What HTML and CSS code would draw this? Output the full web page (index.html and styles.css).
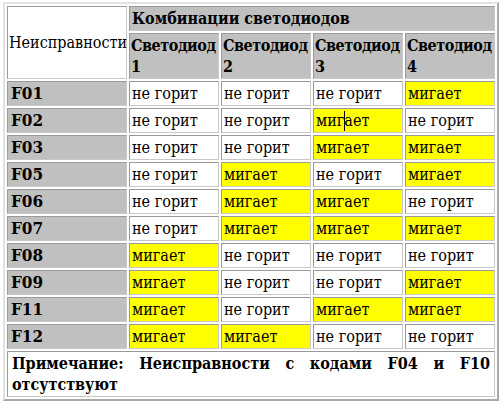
FILE: index.html
```html
<!DOCTYPE html>
<html>
<head>
<meta charset="utf-8">
<link rel="stylesheet" href="styles.css">
</head>
<body>
<table class="codes">
  <colgroup>
    <col class="c0"><col class="cl"><col class="cl"><col class="cl"><col class="cl">
  </colgroup>
  <tr class="h1">
    <td rowspan="2" class="fault-head">Неисправности</td>
    <th colspan="4" class="g">Комбинации светодиодов</th>
  </tr>
  <tr class="h2">
    <th class="g">Светодиод 1</th>
    <th class="g">Светодиод 2</th>
    <th class="g">Светодиод 3</th>
    <th class="g">Светодиод 4</th>
  </tr>
  <tr><th class="g code">F01</th><td>не горит</td><td>не горит</td><td>не горит</td><td class="y">мигает</td></tr>
  <tr><th class="g code">F02</th><td>не горит</td><td>не горит</td><td class="y cur-cell">мигает<span class="cursor"></span></td><td>не горит</td></tr>
  <tr><th class="g code">F03</th><td>не горит</td><td>не горит</td><td class="y">мигает</td><td class="y">мигает</td></tr>
  <tr><th class="g code">F05</th><td>не горит</td><td class="y">мигает</td><td>не горит</td><td class="y">мигает</td></tr>
  <tr><th class="g code">F06</th><td>не горит</td><td class="y">мигает</td><td class="y">мигает</td><td>не горит</td></tr>
  <tr><th class="g code">F07</th><td>не горит</td><td class="y">мигает</td><td class="y">мигает</td><td class="y">мигает</td></tr>
  <tr><th class="g code">F08</th><td class="y">мигает</td><td>не горит</td><td>не горит</td><td>не горит</td></tr>
  <tr><th class="g code">F09</th><td class="y">мигает</td><td>не горит</td><td>не горит</td><td class="y">мигает</td></tr>
  <tr><th class="g code">F11</th><td class="y">мигает</td><td>не горит</td><td class="y">мигает</td><td class="y">мигает</td></tr>
  <tr><th class="g code">F12</th><td class="y">мигает</td><td class="y">мигает</td><td>не горит</td><td>не горит</td></tr>
  <tr><td colspan="5" class="note">Примечание: Неисправности с кодами F04 и F10 отсутствуют</td></tr>
</table>
</body>
</html>
```
FILE: styles.css
```css
html, body {
  margin: 0;
  padding: 0;
  background: #ffffff;
}

body {
  font-family: "DejaVu Serif Condensed", "DejaVu Serif", serif;
  font-stretch: condensed;
  font-size: 16px;
  color: #000;
}

.codes {
  margin: 2px 0 0 3px;
  width: 496px;
  table-layout: fixed;
  border-collapse: separate;
  border-spacing: 2px;
  border: 2px solid;
  border-color: #e2e2e2 #a8a8a8 #a8a8a8 #e2e2e2;
}

.c0 { width: 120px; }
.cl { width: 90px; }

.codes td,
.codes th {
  padding: 1px 2px;
  border: 1px solid;
  border-color: #9a9a9a #c8c8c8 #c8c8c8 #9a9a9a;
  text-align: left;
  vertical-align: top;
  line-height: 21px;
  font-size: 16px;
  white-space: normal;
}

.codes th { font-weight: bold; }

.h2 th {
  padding: 1px 0 1px 1px;
  letter-spacing: -0.45px;
}

.g { background: #c0c0c0; }
.y { background: #ffff00; }

.fault-head {
  vertical-align: middle !important;
  font-weight: normal;
  white-space: nowrap;
  padding-left: 1px !important;
  padding-right: 0 !important;
}

.codes .code {
  padding-left: 3px;
  font-size: 17px;
}

.cur-cell { position: relative; }

.cursor {
  position: absolute;
  left: 30px;
  top: 2px;
  width: 1px;
  height: 20px;
  background: #000;
}

.note {
  font-weight: bold;
  text-align: justify !important;
  text-align-last: left;
  padding: 1px 4px !important;
}
```
